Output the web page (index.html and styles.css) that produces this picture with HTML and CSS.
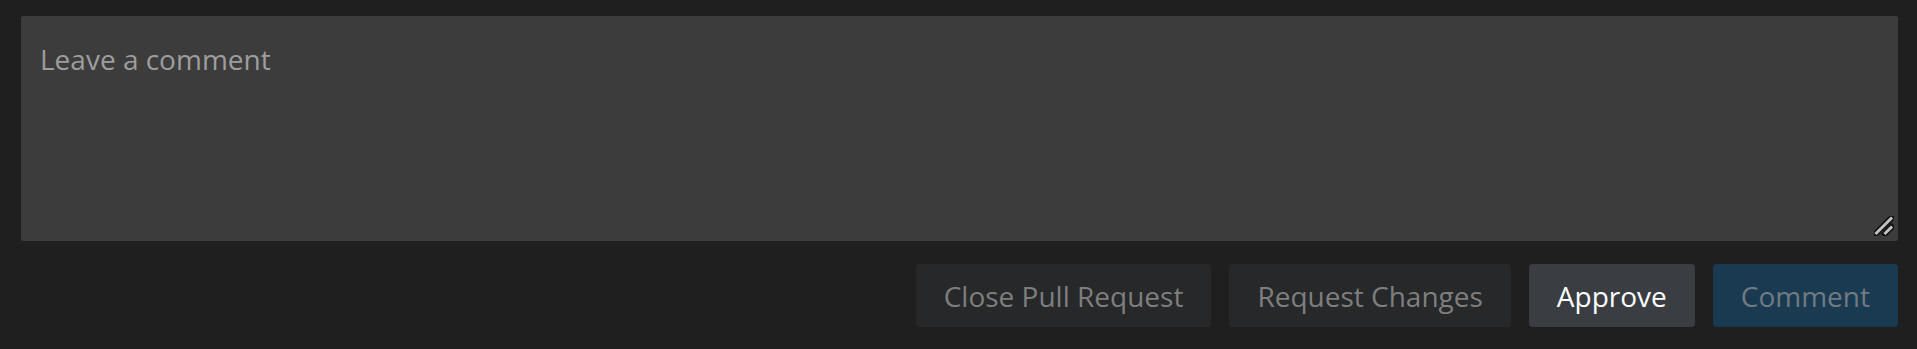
FILE: index.html
```html
<!DOCTYPE html>
<html lang="en">
<head>
<meta charset="utf-8">
<title>Comment</title>
<link rel="stylesheet" href="styles.css">
</head>
<body>
<div class="review">
  <div class="comment-wrap">
    <textarea class="comment-box" placeholder="Leave a comment"></textarea>
    <svg class="grip" width="20" height="20" viewBox="0 0 20 20" aria-hidden="true">
      <g stroke-linecap="square">
        <line x1="2" y1="17.5" x2="17.5" y2="2" stroke="#121212" stroke-width="6"/>
        <line x1="11" y1="17.5" x2="17.5" y2="11" stroke="#121212" stroke-width="6"/>
        <line x1="2.5" y1="17" x2="17" y2="2.5" stroke="#c2c2c2" stroke-width="3"/>
        <line x1="11.5" y1="17" x2="17" y2="11.5" stroke="#c2c2c2" stroke-width="3"/>
      </g>
    </svg>
  </div>
  <div class="actions">
    <button class="btn btn-secondary">Close Pull Request</button>
    <button class="btn btn-secondary">Request Changes</button>
    <button class="btn btn-approve">Approve</button>
    <button class="btn btn-primary">Comment</button>
  </div>
</div>
</body>
</html>
```

FILE: styles.css
```css
html, body {
  margin: 0;
  padding: 0;
  background: #1f1f1f;
  color-scheme: dark;
}
.review {
  padding: 16px 19px 0 21px;
  display: flex;
  flex-direction: column;
  font-family: "Open Sans", "Noto Sans", sans-serif;
}
.comment-wrap {
  position: relative;
}
.comment-box {
  display: block;
  box-sizing: border-box;
  width: 100%;
  height: 225px;
  margin: 0;
  padding: 24px 19px;
  border: none;
  border-radius: 2px;
  background: #3c3c3c;
  color: #cccccc;
  font-family: inherit;
  font-size: 28px;
  line-height: 1.4;
  resize: none;
  outline: none;
}
.comment-box::placeholder {
  color: #9d9d9d;
}
.grip {
  position: absolute;
  right: 4px;
  bottom: 5px;
  pointer-events: none;
}
.actions {
  display: flex;
  justify-content: flex-end;
  gap: 18px;
  margin-top: 23px;
}
.btn {
  box-sizing: border-box;
  height: 63px;
  padding: 0 28px;
  border: none;
  border-radius: 4px;
  font-family: inherit;
  font-size: 28px;
  cursor: pointer;
}
.btn-secondary {
  background: #27282a;
  color: #7e7e7e;
}
.btn-approve {
  background: #3a3d41;
  color: #ffffff;
}
.btn-primary {
  background: #1a3a52;
  color: #6f7a82;
}
```
